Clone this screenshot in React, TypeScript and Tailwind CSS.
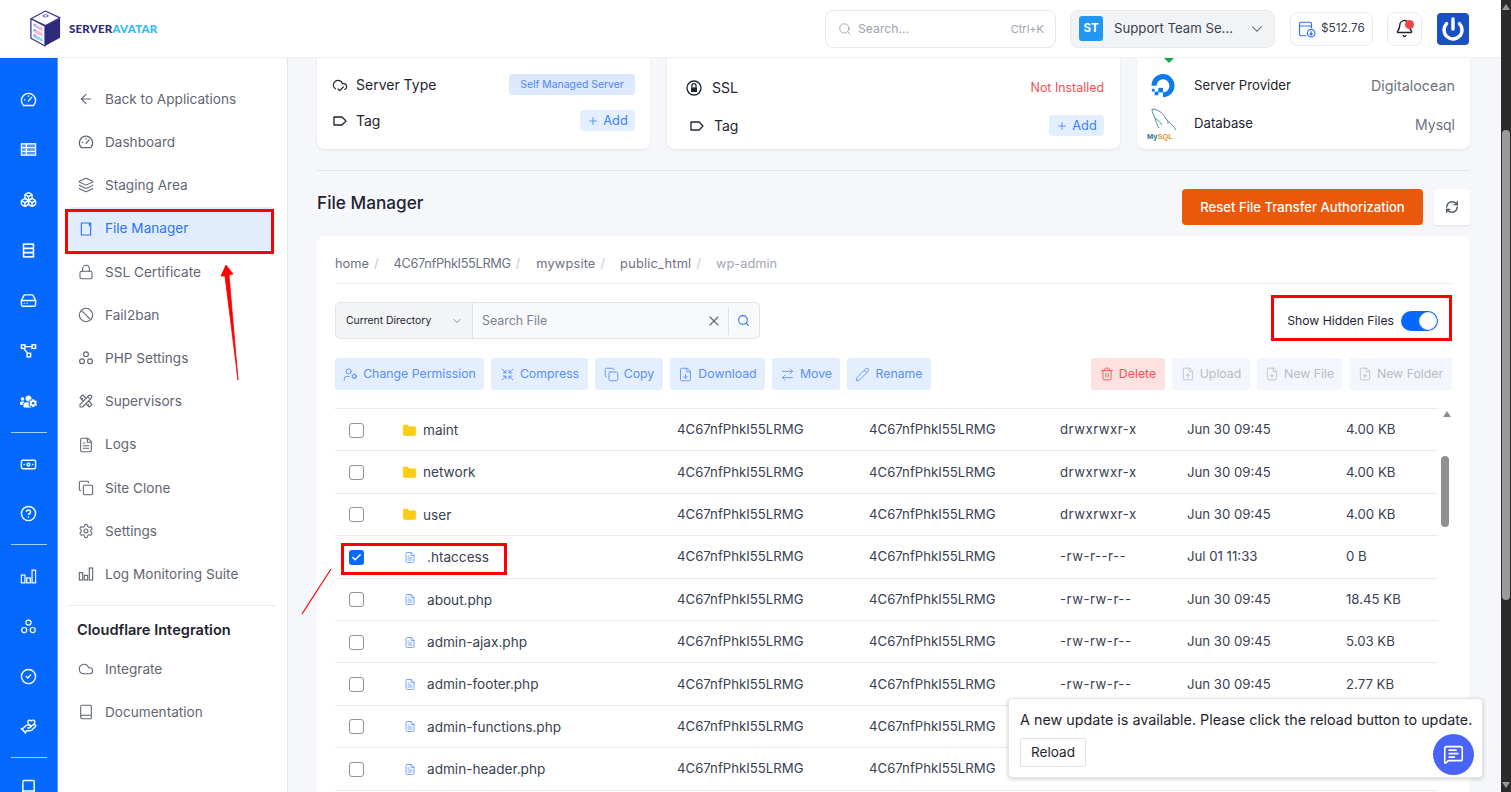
import React from "react";
import {
  ArrowLeft, Layers, Ban, FileText, Copy, Settings, Cloud, Book, Search, ChevronDown, Bell, Power, CloudCheck, Plus, RefreshCw, X, UserCog, FileDown, ArrowRightLeft, Pencil, Trash2, FileUp, FilePlus, MessageSquareText, Check, Boxes, HardDrive, Banknote, CircleHelp, CircleCheck, HandHeart, Folder, Lock,
} from "lucide-react";
import { TbTools } from "react-icons/tb";
import { FaUsersCog } from "react-icons/fa";

type IC = { className?: string };
const GaugeIcon = ({ className = "" }: IC) => (
  <svg viewBox="0 0 24 24" fill="none" stroke="currentColor" strokeWidth="1.9" strokeLinejoin="round" strokeLinecap="round" className={className}>
    <path d="M5 20.5a10 10 0 1 1 14 0z" /><path d="M12 14l4.5-5M6.5 12.5h.5M12 7v.5" />
  </svg>
);
const Three = ({ className = "" }: IC) => (
  <svg viewBox="0 0 24 24" fill="none" stroke="currentColor" strokeWidth="1.7" className={className}>
    <circle cx="12" cy="6.5" r="3.6" /><circle cx="6" cy="17" r="3.6" /><circle cx="18" cy="17" r="3.6" />
  </svg>
);
const Bars = ({ className = "" }: IC) => (
  <svg viewBox="0 0 24 24" fill="none" stroke="currentColor" strokeWidth="1.7" className={className}>
    <rect x="2" y="10" width="5" height="11" /><rect x="9.5" y="14" width="5" height="7" /><rect x="17" y="3" width="5" height="18" />
  </svg>
);
const FileMgr = ({ className = "" }: IC) => (
  <svg viewBox="0 0 24 24" fill="none" stroke="currentColor" strokeWidth="1.7" className={className}>
    <path d="M17 3H5v18h14V3h-2v5" />
  </svg>
);
const TableIcon = ({ className = "" }: IC) => (
  <svg viewBox="0 0 24 24" fill="none" stroke="currentColor" strokeWidth="1.8" className={className}>
    <rect x="2" y="4" width="20" height="16" fill="currentColor" fillOpacity="0.3" />
    <path d="M2 9.5h20M2 14.5h20M9 4v16" />
  </svg>
);
const StackIcon = ({ className = "" }: IC) => (
  <svg viewBox="0 0 24 24" fill="none" stroke="currentColor" strokeWidth="2.2" className={className}>
    <rect x="5" y="3" width="14" height="18" /><path d="M5 9h14M5 15h14" />
  </svg>
);
const NodesIcon = ({ className = "" }: IC) => (
  <svg viewBox="0 0 24 24" fill="none" stroke="currentColor" strokeWidth="2" className={className}>
    <rect x="2" y="4" width="5" height="5" /><rect x="17" y="4" width="5" height="5" /><rect x="10" y="16" width="5" height="5" />
    <path d="M7 6.5h10M5 9l6 7" />
  </svg>
);
const LabelIcon = ({ className = "" }: IC) => (
  <svg viewBox="0 0 24 24" fill="none" stroke="currentColor" strokeWidth="2" strokeLinejoin="round" className={className}>
    <path d="M3 6h12l6 6-6 6H3z" />
  </svg>
);
const SslIcon = ({ className = "" }: IC) => (
  <svg viewBox="0 0 24 24" fill="none" stroke="currentColor" strokeWidth="2" className={className}>
    <circle cx="12" cy="12" r="10.5" />
    <rect x="7.5" y="11" width="9" height="7" fill="currentColor" stroke="none" />
    <path d="M9 11V8.5a3 3 0 0 1 6 0V11" />
  </svg>
);
const WalletIcon = ({ className = "" }: IC) => (
  <svg viewBox="0 0 24 24" fill="none" stroke="currentColor" strokeWidth="1.6" className={className}>
    <path d="M11 21H4a2 2 0 0 1-2-2V5a2 2 0 0 1 2-2h12a2 2 0 0 1 2 2v6M2 8h16" />
    <circle cx="17.5" cy="17.5" r="5" /><path d="M17.5 15v5M15.5 18l2 2 2-2" />
  </svg>
);
const CompressIcon = ({ className = "" }: IC) => (
  <svg viewBox="0 0 24 24" fill="none" stroke="currentColor" strokeWidth="1.5" className={className}>
    <path d="M3 3l6.5 6.5M9.5 4.5v5h-5M21 3l-6.5 6.5M14.5 4.5v5h5M3 21l6.5-6.5M9.5 19.5v-5h-5M21 21l-6.5-6.5M14.5 19.5v-5h5" />
  </svg>
);

const rail1 = [GaugeIcon, TableIcon, Boxes, StackIcon, HardDrive, NodesIcon, FaUsersCog];
const rail2 = [Banknote, CircleHelp];
const rail3 = [Bars, Three, CircleCheck, HandHeart];

const RailDivider = () => (
  <div className="h-[13px] flex items-center justify-center shrink-0">
    <div className="w-[36px] h-px bg-[#a9cbff]" />
  </div>
);
const RailItem = ({ I, h = "h-[50px]" }: { I: any; h?: string }) => (
  <div className={`${h} flex items-center justify-center shrink-0`}>
    <I className="w-[17px] h-[17px] text-white" strokeWidth={2} />
  </div>
);

const menu: [any, string][] = [
  [ArrowLeft, "Back to Applications"], [GaugeIcon, "Dashboard"], [Layers, "Staging Area"], [FileMgr, "File Manager"],
  [Lock, "SSL Certificate"], [Ban, "Fail2ban"], [Three, "PHP Settings"], [TbTools, "Supervisors"], [FileText, "Logs"],
  [Copy, "Site Clone"], [Settings, "Settings"], [Bars, "Log Monitoring Suite"],
];

const MenuItem = ({ I, label }: { I: any; label: string }) => {
  const active = label === "File Manager";
  return (
    <div className={`h-[43.2px] w-[206px] ml-[8px] pl-[12px] flex items-center gap-[11px] rounded-l-[6px] text-[13.6px] ${active ? "bg-[#e1edfd] text-[#2f72f5]" : "text-[#5f6672]"}`}>
      <I className="w-[16px] h-[16px] shrink-0" strokeWidth={1.6} />
      <span>{label}</span>
    </div>
  );
};

const Row = ({ I, label, children, cls = "", inner = "gap-[8px]" }: { I: any; label: string; children: React.ReactNode; cls?: string; inner?: string }) => (
  <div className={`flex items-center justify-between ${cls}`}>
    <div className={`flex items-center text-[14px] text-[#1f2430] ${inner}`}>
      <I className="w-[16px] h-[16px]" strokeWidth={1.8} />
      <span className="pb-px">{label}</span>
    </div>
    {children}
  </div>
);

const AddBtn = () => (
  <div className="h-[21px] w-[55px] rounded-[4px] bg-[#e3eefe] text-[#3b82f6] text-[12.8px] flex items-center justify-center gap-[4px] pt-px">
    <Plus className="w-[12px] h-[12px]" strokeWidth={1.5} />Add
  </div>
);

const DOLogo = () => (
  <svg viewBox="0 0 28 28" className="w-[28px] h-[26px] shrink-0">
    <path d="M14 26v-5.2a7 7 0 1 0-7-7H1.6A12.4 12.4 0 1 1 14 26z" fill="#0a7cf0" />
    <rect x="9" y="16" width="5" height="5" fill="#0a7cf0" /><rect x="5" y="20" width="4" height="4" fill="#0a7cf0" /><rect x="2" y="17" width="3" height="3" fill="#0a7cf0" />
  </svg>
);
const MySqlLogo = () => (
  <div className="relative w-[33px] h-[32px] shrink-0">
    <svg viewBox="0 0 33 24" className="absolute left-0 top-0 w-[33px] h-[24px]" fill="none" stroke="#4f8aa0" strokeWidth="1">
      <path d="M5 1c6 0 11 4 14 10 3 3 7 6 10 11M5 1c0 4 2 6 3 9 1 4 2 7 4 10M8 10c2 2 5 3 7 7M19 11c2 1 2 3 2 5" />
    </svg>
    <span className="absolute left-0 bottom-0 text-[7.5px] leading-none font-bold font-['Liberation_Sans',sans-serif] text-[#2f6f8f]">My<span className="text-[#e8932d]">SQL</span></span>
  </div>
);

const tb: [any, string, string][] = [
  [UserCog, "Change Permission", "w-[149px]"], [CompressIcon, "Compress", "w-[97px]"], [Copy, "Copy", "w-[68px]"],
  [FileDown, "Download", "w-[95px]"], [ArrowRightLeft, "Move", "w-[68px]"], [Pencil, "Rename", "w-[84px]"],
];
const tb2: [any, string, string][] = [
  [FileUp, "Upload", "w-[78px]"], [FilePlus, "New File", "w-[85px]"], [FilePlus, "New Folder", "w-[103px]"],
];

const OWNER = "4C67nfPhkI55LRMG";
const files: [boolean, string, string, string, string, boolean?][] = [
  [true, "maint", "drwxrwxr-x", "Jun 30 09:45", "4.00 KB"],
  [true, "network", "drwxrwxr-x", "Jun 30 09:45", "4.00 KB"],
  [true, "user", "drwxrwxr-x", "Jun 30 09:45", "4.00 KB"],
  [false, ".htaccess", "-rw-r--r--", "Jul 01 11:33", "0 B", true],
  [false, "about.php", "-rw-rw-r--", "Jun 30 09:45", "18.45 KB"],
  [false, "admin-ajax.php", "-rw-rw-r--", "Jun 30 09:45", "5.03 KB"],
  [false, "admin-footer.php", "-rw-rw-r--", "Jun 30 09:45", "2.77 KB"],
  [false, "admin-functions.php", "", "", ""],
  [false, "admin-header.php", "", "", ""],
];

const Logo = () => (
  <svg viewBox="0 0 36 38" className="w-[35px] h-[37px] shrink-0">
    <path d="M3 9 18 1l15 7-15 8z" fill="#fff" stroke="#3b3690" strokeWidth="1.3" strokeLinejoin="round" />
    <path d="M15 6l3-1.5 3 1.5-3 1.5z" fill="none" stroke="#3b3690" strokeWidth="0.8" />
    <path d="M3 9l14.5 7.5V37L3 29z" fill="#fff" stroke="#3b3690" strokeWidth="1.3" strokeLinejoin="round" />
    <path d="M33 8.5v20L17.5 37V16.5z" fill="#2e2a7b" />
    <path d="M5.5 13.5l9.5 5v3.5l-9.5-5zM5.5 19l9.5 5v3.5l-9.5-5z" fill="#f5b8d4" />
    <path d="M5.5 24.5l9.5 5V33l-9.5-5z" fill="#8fd6f5" />
    <circle cx="7" cy="15" r="1" fill="#35b8f0" /><circle cx="7" cy="20.5" r="1" fill="#35b8f0" /><circle cx="7" cy="26" r="1" fill="#e86aa8" />
  </svg>
);

export default function App() {
  return (
    <div className="relative w-[1511px] h-[792px] overflow-hidden flex bg-[#f5f7fb] font-['Inter',sans-serif] text-[13px]">
      <div className="w-[1501px] h-full flex flex-col">
        {/* header */}
        <header className="h-[58px] shrink-0 bg-white border-b border-[#eef0f4] flex items-center pr-[32px] relative z-10">
          <div className="ml-[28px] flex items-center gap-[6px]">
            <Logo />
            <span className="text-[11.5px] font-black font-['Lato',sans-serif] tracking-[0.2px] text-[#2f2a7a]">SERVER<span className="text-[#35b8f0]">AVATAR</span></span>
          </div>
          <div className="ml-auto flex items-center">
            <div className="w-[231px] h-[38px] rounded-[8px] border border-[#e6e8ec] flex items-center pl-[12px] pr-[11px] text-[#9ca3af]">
              <Search className="w-[14px] h-[14px]" strokeWidth={1.6} />
              <span className="ml-[6px] text-[12.2px] pt-px">Search...</span>
              <span className="ml-auto text-[11px] pt-px">Ctrl+K</span>
            </div>
            <div className="ml-[14px] w-[205px] h-[38px] rounded-[8px] bg-[#f2f3f5] border border-[#e8eaee] flex items-center pl-[8px] pr-[8px]">
              <div className="w-[24px] h-[25px] rounded-[3px] bg-[#2196f3] text-white text-[11.5px] font-bold flex items-center justify-center">ST</div>
              <span className="ml-[11px] text-[13.2px] text-[#374151] pt-px">Support Team Se...</span>
              <ChevronDown className="ml-auto w-[18px] h-[18px] text-[#4b5563]" strokeWidth={1.4} />
            </div>
            <div className="ml-[15px] w-[83px] h-[34px] rounded-[8px] border border-[#e8eaee] flex items-center pl-[7px]">
              <WalletIcon className="w-[18px] h-[18px] text-[#2f72f5]" />
              <span className="ml-[5px] text-[11.8px] text-[#374151] pt-px">$512.76</span>
            </div>
            <div className="ml-[14px] relative w-[35px] h-[34px] rounded-[8px] border border-[#e8eaee] flex items-center justify-center">
              <Bell className="w-[19px] h-[19px] text-[#1f2430]" strokeWidth={1.8} />
              <span className="absolute right-[7px] top-[7px] w-[9px] h-[9px] rounded-full bg-[#ef4444]" />
            </div>
            <div className="ml-[15px] w-[32px] h-[32px] rounded-[4px] bg-[#1b4fc4] flex items-center justify-center">
              <Power className="w-[24px] h-[24px] text-white" strokeWidth={3.4} />
            </div>
          </div>
        </header>

        <div className="flex-1 flex min-h-0">
          {/* rail */}
          <nav className="w-[58px] shrink-0 bg-[#0569ff] border-r border-[#5b9dff] pt-[16px] overflow-hidden flex flex-col">
            {rail1.map((I, i) => <RailItem key={i} I={I} h="h-[50.33px]" />)}
            <RailDivider />
            {rail2.map((I, i) => <RailItem key={i} I={I} h="h-[49.6px]" />)}
            <RailDivider />
            {rail3.map((I, i) => <RailItem key={i} I={I} />)}
            <RailDivider />
            <div className="-mt-[2px]"><RailItem I={Book} /></div>
          </nav>

          {/* sidebar */}
          <aside className="w-[230px] shrink-0 bg-white border-r border-[#e5e7eb] pt-[19.5px]">
            {menu.map(([I, l]) => <MenuItem key={l} I={I} label={l} />)}
            <div className="mt-[9.5px] ml-[11px] mr-[11px] h-px bg-[#e8eaee]" />
            <div className="mt-[14px] ml-[19px] h-[20px] leading-[20px] text-[14.6px] font-semibold text-[#1f2430]">Cloudflare Integration</div>
            <div className="mt-[7px]">
              <MenuItem I={Cloud} label="Integrate" />
              <MenuItem I={Book} label="Documentation" />
            </div>
          </aside>

          {/* main */}
          <main className="flex-1 min-w-0 pl-[29px] pr-[31px] overflow-hidden">
            <div className="grid grid-cols-[333px_453px_333px] gap-[17px] h-[91px]">
              <div className="bg-white rounded-b-[8px] shadow-[0_1px_3px_rgba(0,0,0,0.08)] px-[15px] pt-[16px]">
                <Row I={CloudCheck} label="Server Type" cls="h-[21px]">
                  <span className="w-[126px] h-[21px] rounded-[4px] bg-[#dbe8fd] text-[#4f86f7] text-[10.4px] flex items-center justify-center">Self Managed Server</span>
                </Row>
                <Row I={LabelIcon} label="Tag" cls="h-[21px] mt-[15px]"><AddBtn /></Row>
              </div>
              <div className="bg-white rounded-b-[8px] shadow-[0_1px_3px_rgba(0,0,0,0.08)] pl-[19px] pr-[16px] pt-[19px]">
                <Row I={SslIcon} label="SSL" cls="h-[21px]" inner="gap-[10px]">
                  <span className="text-[#f05252] text-[12.4px] pt-px">Not Installed</span>
                </Row>
                <Row I={LabelIcon} label="Tag" cls="h-[21px] mt-[17px]" inner="gap-[9px] pl-[3px]"><AddBtn /></Row>
              </div>
              <div className="bg-white rounded-b-[8px] shadow-[0_1px_3px_rgba(0,0,0,0.08)] pl-[12px] pr-[15px]">
                <div className="ml-[15px] w-[10px] h-[5px] bg-[#16a34a] [clip-path:polygon(0_0,100%_0,50%_100%)]" />
                <div className="mt-[10px] flex items-center h-[26px]">
                  <DOLogo />
                  <span className="ml-[17px] text-[13.2px] text-[#1f2430]">Server Provider</span>
                  <span className="ml-auto text-[14.3px] text-[#6b7280]">Digitalocean</span>
                </div>
                <div className="mt-[9px] flex items-center h-[32px] -ml-[2px]">
                  <MySqlLogo />
                  <span className="ml-[14px] text-[13.2px] text-[#1f2430]">Database</span>
                  <span className="ml-auto text-[14px] text-[#6b7280]">Mysql</span>
                </div>
              </div>
            </div>

            <div className="mt-[21px] h-px bg-[#e3e6ec]" />

            <div className="mt-[18px] flex items-center h-[36px]">
              <h2 className="text-[17.2px] font-medium text-[#1f2430] -mt-[9px]">File Manager</h2>
              <div className="ml-auto w-[241px] h-[36px] rounded-[4px] bg-[#ea580c] text-white text-[13.1px] font-medium flex items-center justify-center pt-px">Reset File Transfer Authorization</div>
              <div className="ml-[11px] w-[36px] h-[36px] rounded-[4px] bg-white shadow-[0_1px_2px_rgba(0,0,0,0.08)] flex items-center justify-center">
                <RefreshCw className="w-[14px] h-[14px] text-[#4b5563]" strokeWidth={2.4} />
              </div>
            </div>

            <section className="mt-[11px] bg-white rounded-[8px] px-[18px] pt-[17px] h-[600px] shadow-[0_1px_2px_rgba(0,0,0,0.04)]">
              <div className="h-[20px] flex items-center text-[12.8px] text-[#6b7280] pt-px">
                <span>home</span><span className="ml-[5px] mr-[15px] text-[#c4c8cf]">/</span>
                <span className="tracking-[-0.35px]">{OWNER}</span><span className="ml-[5px] mr-[16px] text-[#c4c8cf]">/</span>
                <span className="tracking-[0.15px]">mywpsite</span><span className="ml-[5px] mr-[15px] text-[#c4c8cf]">/</span>
                <span className="tracking-[0.2px]">public_html</span><span className="ml-[5px] mr-[15px] text-[#c4c8cf]">/</span>
                <span className="text-[#a0a6b0]">wp-admin</span>
              </div>
              <div className="mt-[10px] h-px bg-[#eceef2]" />

              <div className="mt-[18px] flex items-center justify-between h-[37px]">
                <div className="w-[425px] h-[37px] rounded-[5px] border border-[#dfe3ea] bg-[#f8f9fb] flex items-center overflow-hidden">
                  <div className="w-[137px] h-full bg-[#f3f4f6] border-r border-[#dfe3ea] flex items-center pl-[10px] pr-[9px] text-[10.4px] text-[#1f2430]">
                    <span className="pt-px">Current Directory</span>
                    <ChevronDown className="ml-auto w-[12px] h-[12px] text-[#6b7280]" strokeWidth={1.6} />
                  </div>
                  <span className="ml-[9px] text-[12.4px] text-[#7b828e] pt-px">Search File</span>
                  <X className="ml-auto w-[16px] h-[16px] text-[#5f6672]" strokeWidth={1.6} />
                  <div className="ml-[6px] w-px h-[28px] bg-[#dfe3ea]" />
                  <Search className="ml-[8px] mr-[9px] w-[13px] h-[13px] text-[#2f72f5]" strokeWidth={2} />
                </div>
                <div className="flex items-center gap-[7px] mr-[14px]">
                  <span className="text-[12.2px] text-[#1f2430] pt-px">Show Hidden Files</span>
                  <div className="w-[37px] h-[20px] rounded-full bg-[#0569ff] relative">
                    <span className="absolute right-[1px] top-[1px] w-[18px] h-[18px] rounded-full bg-white border border-[#e5e7eb]" />
                  </div>
                </div>
              </div>

              <div className="mt-[19px] flex items-center h-[32px] gap-[7px]">
                {tb.map(([I, l, w]) => (
                  <div key={l} className={`${w} h-[32px] rounded-[3px] bg-[#e3eefe] text-[#5b8ff5] text-[12.3px] flex items-center justify-center gap-[5px]`}>
                    <I className="w-[15px] h-[15px] shrink-0" strokeWidth={1.4} /><span>{l}</span>
                  </div>
                ))}
                <div className="ml-auto w-[74px] h-[32px] rounded-[3px] bg-[#fee2e2] text-[#f05252] text-[12.3px] flex items-center justify-center gap-[5px]">
                  <Trash2 className="w-[14px] h-[14px]" strokeWidth={1.6} />Delete
                </div>
                {tb2.map(([I, l, w]) => (
                  <div key={l} className={`${w} h-[32px] rounded-[3px] bg-[#f3f6fd] text-[#b7bcc6] text-[12.3px] flex items-center justify-center gap-[5px]`}>
                    <I className="w-[14px] h-[14px] shrink-0" strokeWidth={1.4} /><span>{l}</span>
                  </div>
                ))}
              </div>

              <div className="mt-[18px] flex">
                <div className="w-[1102px] border-t border-[#e7e9ee]">
                  {files.map(([dir, name, perm, date, size, checked]) => (
                    <div key={name} className="h-[42.4px] pt-px border-b border-[#e7e9ee] grid grid-cols-[67px_275px_192px_191px_127px_159px_91px] items-center text-[13.2px] text-[#374151]">
                      <div className="pl-[14px]">
                        {checked ? (
                          <div className="w-[15px] h-[15px] rounded-[3px] bg-[#0569ff] flex items-center justify-center">
                            <Check className="w-[11px] h-[11px] text-white" strokeWidth={3.5} />
                          </div>
                        ) : (
                          <div className="w-[15px] h-[15px] rounded-[3px] border border-[#8b9099] bg-white" />
                        )}
                      </div>
                      <div className="flex items-center">
                        {dir ? (
                          <Folder className="w-[15px] h-[15px] text-[#facc15] fill-[#facc15] shrink-0" strokeWidth={1} />
                        ) : (
                          <FileText className="ml-[2px] w-[12px] h-[13px] text-[#5b8ff5] shrink-0" strokeWidth={1.6} />
                        )}
                        <span className={`text-[13.6px] ${dir ? "ml-[6px]" : "ml-[11px]"}`}>{name}</span>
                      </div>
                      <span>{OWNER}</span>
                      <span>{OWNER}</span>
                      <span className="tracking-[0.5px]">{perm}</span>
                      <span>{date}</span>
                      <span>{size}</span>
                    </div>
                  ))}
                </div>
                <div className="w-[15px] shrink-0 pl-[4px] pt-[3px]">
                  <div className="w-0 h-0 mx-auto border-x-[4px] border-x-transparent border-b-[6px] border-b-[#8f8f8f]" />
                  <div className="mt-[39px] w-[8px] h-[71px] rounded-full bg-[#8f8f8f]" />
                </div>
              </div>
            </section>
          </main>
        </div>
      </div>

      {/* browser scrollbar */}
      <div className="w-[10px] h-full bg-[#2b2b2b] pt-[4px] flex flex-col items-center">
        <div className="w-0 h-0 border-x-[4px] border-x-transparent border-b-[6px] border-b-[#9a9a9a]" />
        <div className="mt-[120px] w-[8px] h-[470px] rounded-full bg-[#9a9a9a]" />
        <div className="mt-auto mb-[4px] w-0 h-0 border-x-[4px] border-x-transparent border-t-[6px] border-t-[#9a9a9a]" />
      </div>

      {/* annotations */}
      <div className="absolute left-[65px] top-[209px] w-[209px] h-[45px] border-[3px] border-[#ff0000]" />
      <div className="absolute left-[1271px] top-[295px] w-[181px] h-[46px] border-[3px] border-[#ff0000]" />
      <div className="absolute left-[341px] top-[543px] w-[166px] h-[32px] border-[3px] border-[#ff0000]" />
      <svg className="absolute left-[210px] top-[255px] w-[40px] h-[130px]" viewBox="0 0 40 130">
        <path d="M28 125 19 20l4-1-7-9-5 11 4 0z" fill="#ff0000" stroke="#ff0000" strokeWidth="0.8" />
      </svg>
      <svg className="absolute left-[298px] top-[562px] w-[40px] h-[56px]" viewBox="0 0 40 56">
        <path d="M4 52 33 7" stroke="#ff0000" strokeWidth="1.2" fill="none" />
      </svg>

      {/* toast */}
      <div className="absolute left-[1008px] top-[698px] w-[475px] h-[80px] bg-white rounded-[4px] border border-[#e3e5e8] shadow-[0_1px_4px_rgba(0,0,0,0.2)] pl-[11px] pt-[12px] z-20">
        <div className="text-[14.35px] leading-[18px] whitespace-nowrap text-[#1f2430]">A new update is available. Please click the reload button to update.</div>
        <div className="mt-[9px] w-[66px] h-[29px] border border-[#e0e2e6] rounded-[2px] flex items-center justify-center text-[13.6px] text-[#1f2430]">Reload</div>
        <div className="absolute left-[424px] top-[35px] w-[41px] h-[41px] rounded-full bg-[#4a63f7] flex items-center justify-center">
          <MessageSquareText className="w-[21px] h-[21px] text-white" strokeWidth={1.8} />
        </div>
      </div>
    </div>
  );
}
